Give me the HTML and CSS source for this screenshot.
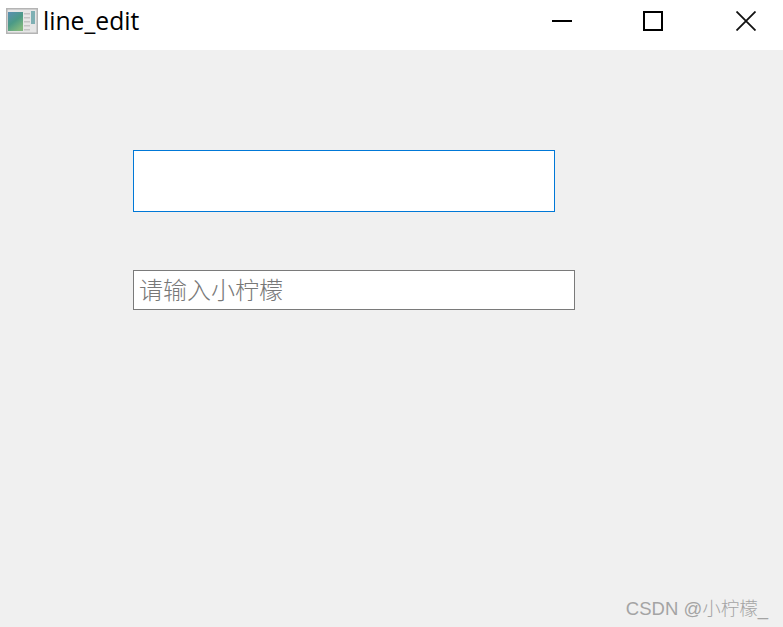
FILE: index.html
```html
<!DOCTYPE html>
<html lang="zh-CN">
<head>
  <meta charset="UTF-8" />
  <meta name="viewport" content="width=device-width, initial-scale=1.0" />
  <title>line_edit</title>
  <link rel="stylesheet" href="styles.css">
</head>
<body>
  <div class="titlebar">
    <svg class="app-icon" width="32" height="26" viewBox="0 0 32 26">
      <defs>
        <linearGradient id="pane" x1="0" y1="0" x2="0.6" y2="1">
          <stop offset="0" stop-color="#5a8fb4"/>
          <stop offset="0.55" stop-color="#4b9a86"/>
          <stop offset="1" stop-color="#7fb77e"/>
        </linearGradient>
      </defs>
      <rect x="0.75" y="0.75" width="30.5" height="24.5" fill="#e6e6e6" stroke="#b4b4b4" stroke-width="1.5"/>
      <rect x="2" y="4" width="15" height="19" fill="url(#pane)"/>
      <rect x="18" y="5" width="6" height="1.5" fill="#c4c4c4"/>
      <rect x="18" y="9" width="6" height="1.5" fill="#c4c4c4"/>
      <rect x="18" y="13" width="6" height="1.5" fill="#c4c4c4"/>
      <rect x="18" y="17" width="6" height="1.5" fill="#c4c4c4"/>
      <rect x="18" y="21" width="6" height="1.5" fill="#c4c4c4"/>
      <rect x="25" y="3" width="4" height="13" fill="#7fb0b4"/>
    </svg>
    <span class="title">line_edit</span>
    <div class="controls">
      <svg class="min-btn" width="20" height="20" viewBox="0 0 20 20"><path d="M0 10H20" stroke="#000" stroke-width="2"/></svg>
      <svg class="max-btn" width="20" height="20" viewBox="0 0 20 20"><rect x="1" y="1" width="18" height="18" fill="none" stroke="#000" stroke-width="2"/></svg>
      <svg class="close-btn" width="20" height="20" viewBox="0 0 20 20"><path d="M0.5 0.5L19.5 19.5M19.5 0.5L0.5 19.5" stroke="#111" stroke-width="1.8"/></svg>
    </div>
  </div>

  <div class="content">
    <input class="line-edit focused" type="text" />
    <input class="line-edit with-hint" type="text" placeholder="请输入小柠檬" />
  </div>

  <div class="watermark">CSDN @小柠檬_</div>
</body>
</html>
```

FILE: styles.css
```css
html, body {
  height: 100%;
}

body {
  margin: 0;
  background: #f0f0f0;
  font-family: "Open Sans", "Noto Sans CJK SC", sans-serif;
  overflow: hidden;
  position: relative;
}

/* title bar */
.titlebar {
  display: flex;
  align-items: center;
  height: 50px;
  background: #fff;
  padding-left: 6px;
}
.app-icon {
  margin-right: 5px;
  margin-bottom: 9px;
}
.title {
  font-size: 24.7px;
  color: #000;
  margin-bottom: 10px;
}
.controls {
  margin-left: auto;
  margin-top: -8px;
  margin-right: 27px;
  display: flex;
  align-items: center;
}
.min-btn {
  margin-right: 71px;
}
.max-btn {
  margin-right: 73px;
}

/* inputs */
.content {
  display: flex;
  flex-direction: column;
  align-items: flex-start;
  gap: 58px;
  padding: 100px 0 0 133px;
}
.line-edit {
  box-sizing: border-box;
  display: block;
  margin: 0;
  background: #fff;
  outline: none;
  border-radius: 0;
  font-family: "Noto Sans CJK SC", sans-serif;
}
.focused {
  width: 422px;
  height: 62px;
  border: 1px solid #0078d7;
}
.with-hint {
  width: 442px;
  height: 40px;
  border: 1px solid #7a7a7a;
  padding: 0 6px 4px 5px;
  font-size: 24px;
  font-weight: 300;
}
.with-hint::placeholder {
  color: #787878;
  opacity: 1;
}

.watermark {
  position: absolute;
  right: 15px;
  bottom: 7px;
  font-family: "Liberation Sans", "Noto Sans CJK SC", sans-serif;
  font-size: 18.5px;
  font-weight: 300;
  color: #a4a4a4;
}
```
